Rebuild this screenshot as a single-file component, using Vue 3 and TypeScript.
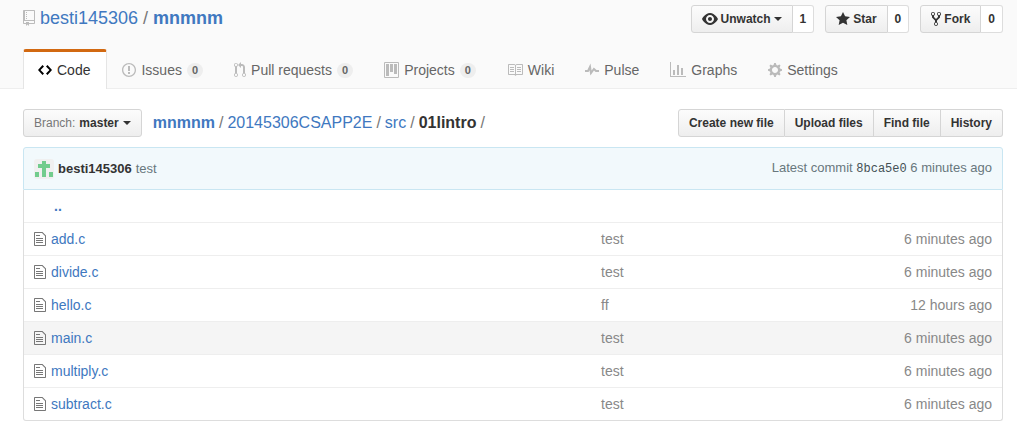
<script setup lang="ts">
interface Icon {
  w: number
  d: string
}

const icons: Record<string, Icon> = {
  repo: { w: 12, d: 'M4 9H3V8h1v1zm0-3H3v1h1V6zm0-2H3v1h1V4zm0-2H3v1h1V2zm8-1v12c0 .55-.45 1-1 1H6v2l-1.5-1.5L3 16v-2H1c-.55 0-1-.45-1-1V1c0-.55.45-1 1-1h10c.55 0 1 .45 1 1zm-1 10H1v2h2v-1h3v1h5v-2zm0-10H2v9h9V1z' },
  code: { w: 14, d: 'M9.5 3L8 4.5 11.5 8 8 11.5 9.5 13 14 8 9.5 3zm-5 0L0 8l4.5 5L6 11.5 2.5 8 6 4.5 4.5 3z' },
  issue: { w: 14, d: 'M7 2.3c3.14 0 5.7 2.56 5.7 5.7s-2.56 5.7-5.7 5.7A5.71 5.71 0 0 1 1.3 8c0-3.14 2.56-5.7 5.7-5.7zM7 1C3.14 1 0 4.14 0 8s3.14 7 7 7 7-3.14 7-7-3.14-7-7-7zm1 3H6v5h2V4zm0 6H6v2h2v-2z' },
  pull: { w: 12, d: 'M11 11.28V5c-.03-.78-.34-1.47-.94-2.06C9.46 2.35 8.78 2.03 8 2H7V0L4 3l3 3V4h1c.27.02.48.11.69.31.21.2.3.42.31.69v6.28A1.993 1.993 0 0 0 10 15a1.993 1.993 0 0 0 1-3.72zm-1 2.92c-.66 0-1.2-.55-1.2-1.2 0-.65.55-1.2 1.2-1.2.65 0 1.2.55 1.2 1.2 0 .65-.55 1.2-1.2 1.2zM4 3c0-1.11-.89-2-2-2a1.993 1.993 0 0 0-1 3.72v6.56A1.993 1.993 0 0 0 2 15a1.993 1.993 0 0 0 1-3.72V4.72c.59-.34 1-.98 1-1.72zm-.8 10c0 .66-.55 1.2-1.2 1.2-.65 0-1.2-.55-1.2-1.2 0-.65.55-1.2 1.2-1.2.65 0 1.2.55 1.2 1.2zM2 4.2C1.34 4.2.8 3.65.8 3c0-.65.55-1.2 1.2-1.2.65 0 1.2.55 1.2 1.2 0 .65-.55 1.2-1.2 1.2z' },
  project: { w: 15, d: 'M10 12h3V2h-3v10zm-4-2h3V2H6v8zm-4 4h3V2H2v12zm-1 1h13V1H1v14zM14 0H1a1 1 0 0 0-1 1v14a1 1 0 0 0 1 1h13a1 1 0 0 0 1-1V1a1 1 0 0 0-1-1z' },
  book: { w: 16, d: 'M3 5h4v1H3V5zm0 3h4V7H3v1zm0 2h4V9H3v1zm11-5h-4v1h4V5zm0 2h-4v1h4V7zm0 2h-4v1h4V9zm2-6v9c0 .55-.45 1-1 1H9.5l-1 1-1-1H2c-.55 0-1-.45-1-1V3c0-.55.45-1 1-1h5.5l1 1 1-1H15c.55 0 1 .45 1 1zm-8 .5L7.5 3H2v9h6V3.5zm7-.5H9.5l-.5.5V12h6V3z' },
  pulse: { w: 14, d: 'M11.5 8L8.8 5.4 6.6 8.5 5.5 1.6 2.38 8H0v2h3.6l.9-1.8.9 5.4L9 8.5l1.6 1.5H14V8z' },
  graph: { w: 16, d: 'M16 14v1H0V0h1v14h15zM5 13H3V8h2v5zm4 0H7V3h2v10zm4 0h-2V6h2v7z' },
  gear: { w: 14, d: 'M14 8.77v-1.6l-1.94-.64-.45-1.09.88-1.84-1.13-1.13-1.81.91-1.09-.45-.69-1.92h-1.6l-.63 1.94-1.11.45-1.84-.88-1.13 1.13.91 1.81-.45 1.09L0 7.23v1.59l1.94.64.45 1.09-.88 1.84 1.13 1.13 1.81-.91 1.09.45.69 1.92h1.59l.63-1.94 1.11-.45 1.84.88 1.13-1.13-.92-1.81.47-1.09L14 8.75v.02zM7 11c-1.66 0-3-1.34-3-3s1.34-3 3-3 3 1.34 3 3-1.34 3-3 3z' },
  eye: { w: 16, d: 'M8.06 2C3 2 0 8 0 8s3 6 8.06 6C13 14 16 8 16 8s-3-6-7.94-6zM8 12c-2.2 0-4-1.78-4-4 0-2.2 1.8-4 4-4 2.22 0 4 1.8 4 4 0 2.22-1.78 4-4 4zm2-4c0 1.11-.89 2-2 2-1.11 0-2-.89-2-2 0-1.11.89-2 2-2 1.11 0 2 .89 2 2z' },
  star: { w: 14, d: 'M14 6l-4.9-.64L7 1 4.9 5.36 0 6l3.6 3.26L2.67 14 7 11.67 11.33 14l-.93-4.74z' },
  fork: { w: 10, d: 'M8 1a1.993 1.993 0 0 0-1 3.72V6L5 8 3 6V4.72A1.993 1.993 0 0 0 2 1a1.993 1.993 0 0 0-1 3.72V6.5l3 3v1.78A1.993 1.993 0 0 0 5 15a1.993 1.993 0 0 0 1-3.72V9.5l3-3V4.72A1.993 1.993 0 0 0 8 1zM2 4.2C1.34 4.2.8 3.65.8 3c0-.65.55-1.2 1.2-1.2.65 0 1.2.55 1.2 1.2 0 .65-.55 1.2-1.2 1.2zm3 10c-.66 0-1.2-.55-1.2-1.2 0-.65.55-1.2 1.2-1.2.65 0 1.2.55 1.2 1.2 0 .65-.55 1.2-1.2 1.2zm3-10c-.66 0-1.2-.55-1.2-1.2 0-.65.55-1.2 1.2-1.2.65 0 1.2.55 1.2 1.2 0 .65-.55 1.2-1.2 1.2z' },
  file: { w: 12, d: 'M6 5H2V4h4v1zM2 8h7V7H2v1zm0 2h7V9H2v1zm0 2h7v-1H2v1zm10-7.5V14c0 .55-.45 1-1 1H1c-.55 0-1-.45-1-1V2c0-.55.45-1 1-1h7.5L12 4.5zM11 5L8 2H1v12h10V5z' },
}

const actions = [
  { icon: 'eye', label: 'Unwatch', count: 1, menu: true },
  { icon: 'star', label: 'Star', count: 0, menu: false },
  { icon: 'fork', label: 'Fork', count: 0, menu: false },
]

const tabs: { icon: string; label: string; count?: number }[] = [
  { icon: 'code', label: 'Code' },
  { icon: 'issue', label: 'Issues', count: 0 },
  { icon: 'pull', label: 'Pull requests', count: 0 },
  { icon: 'project', label: 'Projects', count: 0 },
  { icon: 'book', label: 'Wiki' },
  { icon: 'pulse', label: 'Pulse' },
  { icon: 'graph', label: 'Graphs' },
  { icon: 'gear', label: 'Settings' },
]

const fileActions = ['Create new file', 'Upload files', 'Find file', 'History']

const files = [
  { name: 'add.c', message: 'test', age: '6 minutes ago' },
  { name: 'divide.c', message: 'test', age: '6 minutes ago' },
  { name: 'hello.c', message: 'ff', age: '12 hours ago' },
  { name: 'main.c', message: 'test', age: '6 minutes ago' },
  { name: 'multiply.c', message: 'test', age: '6 minutes ago' },
  { name: 'subtract.c', message: 'test', age: '6 minutes ago' },
]
const focused = 'main.c'
</script>

<template>
  <div class="page">
    <header class="head">
      <div class="wrap title-row">
        <h1 class="title">
          <svg class="icon" width="12" height="16" viewBox="0 0 12 16" aria-hidden="true"><path :d="icons.repo.d" /></svg>
          <a href="#">besti145306</a>
          <span class="sep">/</span>
          <a href="#" class="strong">mnmnm</a>
        </h1>
        <ul class="actions">
          <li v-for="a in actions" :key="a.label">
            <button type="button" class="btn">
              <svg class="icon" :width="icons[a.icon].w" height="16" :viewBox="`0 0 ${icons[a.icon].w} 16`" aria-hidden="true"><path :d="icons[a.icon].d" /></svg>
              {{ a.label }}
              <span v-if="a.menu" class="caret"></span>
            </button>
            <a href="#" class="count">{{ a.count }}</a>
          </li>
        </ul>
      </div>
      <nav class="wrap tabs">
        <a v-for="(t, i) in tabs" :key="t.label" href="#" class="tab" :class="{ selected: i === 0 }">
          <svg class="icon" :width="icons[t.icon].w" height="16" :viewBox="`0 0 ${icons[t.icon].w} 16`" aria-hidden="true"><path :d="icons[t.icon].d" /></svg>
          <span>{{ t.label }}</span>
          <span v-if="t.count !== undefined" class="counter">{{ t.count }}</span>
        </a>
      </nav>
    </header>

    <main class="wrap">
      <div class="file-nav">
        <button type="button" class="btn branch"><span class="muted">Branch:</span> master <span class="caret"></span></button>
        <div class="crumbs">
          <a href="#" class="strong">mnmnm</a><span class="sep">/</span>
          <a href="#">20145306CSAPP2E</a><span class="sep">/</span>
          <a href="#">src</a><span class="sep">/</span>
          <strong>01lintro</strong><span class="sep">/</span>
        </div>
        <div class="group">
          <button v-for="f in fileActions" :key="f" type="button" class="btn">{{ f }}</button>
        </div>
      </div>

      <div class="commit">
        <svg class="avatar" width="20" height="20" viewBox="0 0 20 20" aria-hidden="true">
          <rect width="20" height="20" rx="3" fill="#f0f0f0" />
          <path d="M8 2h4v3h4v4h-4v9H8V9H4V5h4zM1 13h4v5H1zM15 13h4v5h-4z" fill="#72cc8d" />
        </svg>
        <a href="#" class="author">besti145306</a>
        <a href="#" class="message">test</a>
        <span class="latest">Latest commit <a href="#" class="sha">8bca5e0</a> 6 minutes ago</span>
      </div>

      <table class="files">
        <colgroup>
          <col class="col-name" />
          <col class="col-msg" />
          <col />
        </colgroup>
        <tbody>
          <tr>
            <td colspan="3"><a href="#" class="up">..</a></td>
          </tr>
          <tr v-for="f in files" :key="f.name" :class="{ focused: f.name === focused }">
            <td>
              <div class="entry">
                <svg class="icon" width="12" height="16" viewBox="0 0 12 16" aria-hidden="true"><path :d="icons.file.d" /></svg>
                <a href="#">{{ f.name }}</a>
              </div>
            </td>
            <td class="msg">{{ f.message }}</td>
            <td class="age">{{ f.age }}</td>
          </tr>
        </tbody>
      </table>
    </main>
  </div>
</template>

<style>
body {
  margin: 0;
  background: #fff;
}
</style>

<style scoped>
.page {
  font: 14px/20px "Liberation Sans", Arial, sans-serif;
  color: #333;
}
a {
  color: #4078c0;
  text-decoration: none;
}
.icon {
  display: block;
  flex: none;
  fill: currentColor;
  fill-rule: evenodd;
}
.wrap {
  margin: 0 14px 0 23px;
}
.head {
  background: #fafafa;
  border-bottom: 1px solid #eee;
}
.title-row {
  display: flex;
  justify-content: space-between;
  align-items: flex-start;
  padding-top: 5px;
  height: 44px;
  box-sizing: border-box;
}
.title {
  display: flex;
  align-items: center;
  gap: 5px;
  margin: 0;
  font-size: 18px;
  line-height: 26px;
  font-weight: 400;
}
.title .icon {
  color: #bbb;
}
.strong {
  font-weight: 700;
}
.sep {
  color: #777;
}
.actions {
  display: flex;
  gap: 11px;
  margin: 0;
  padding: 0;
  list-style: none;
}
.actions li {
  display: flex;
}
.btn {
  display: flex;
  align-items: center;
  gap: 4px;
  box-sizing: border-box;
  height: 28px;
  margin: 0;
  padding: 0 10px;
  font: bold 12px/20px "Liberation Sans", Arial, sans-serif;
  color: #333;
  white-space: nowrap;
  background: linear-gradient(#fcfcfc, #eee);
  border: 1px solid #d5d5d5;
  border-radius: 3px;
}
.actions .btn {
  gap: 3px;
  border-radius: 3px 0 0 3px;
}
.count {
  box-sizing: border-box;
  height: 28px;
  padding: 0 7px;
  font-size: 12px;
  font-weight: 700;
  line-height: 26px;
  color: #333;
  background: #fff;
  border: 1px solid #ddd;
  border-left: 0;
  border-radius: 0 3px 3px 0;
}
.caret {
  width: 0;
  height: 0;
  border: 4px solid transparent;
  border-top-color: currentColor;
  border-bottom: 0;
}
.tabs {
  display: flex;
  margin-top: 5px;
  margin-bottom: -1px;
}
.tab {
  display: flex;
  align-items: center;
  gap: 5px;
  box-sizing: border-box;
  height: 40px;
  padding: 2px 15px 1px 14px;
  color: #666;
  white-space: nowrap;
  border: 1px solid transparent;
  border-bottom: 0;
}
.tab .icon {
  color: #bbb;
}
.tab.selected {
  padding: 0 16px 1px 14px;
  color: #333;
  background: #fff;
  border-color: #d26911 #e5e5e5 transparent;
  border-top-width: 3px;
  border-radius: 3px 3px 0 0;
}
.tab.selected .icon {
  color: #000;
}
.counter {
  padding: 2px 5px;
  font-size: 11px;
  font-weight: 700;
  line-height: 11px;
  background: #eee;
  border-radius: 20px;
}
.file-nav {
  display: flex;
  align-items: center;
  padding: 20px 0 10px;
}
.branch .muted {
  font-weight: 400;
  color: #777;
}
.crumbs {
  display: flex;
  gap: 4px;
  margin-left: 11px;
  font-size: 16px;
  line-height: 26px;
}
.group {
  display: flex;
  margin-left: auto;
}
.group .btn {
  border-radius: 0;
}
.group .btn + .btn {
  border-left: 0;
}
.group .btn:first-child {
  border-radius: 3px 0 0 3px;
}
.group .btn:last-child {
  border-radius: 0 3px 3px 0;
}
.commit {
  display: flex;
  align-items: center;
  gap: 4px;
  padding: 10px;
  font-size: 13px;
  color: #68777d;
  background: #f2f9fc;
  border: 1px solid #c9e6f2;
  border-radius: 3px 3px 0 0;
}
.author {
  font-weight: 700;
  color: #333;
}
.message {
  color: #68777d;
}
.latest {
  margin-left: auto;
}
.sha {
  font-family: "Liberation Mono", monospace;
  font-size: 12px;
  color: #445055;
}
.files {
  width: 100%;
  table-layout: fixed;
  border: 1px solid #ddd;
  border-top: 0;
  border-radius: 0 0 3px 3px;
  border-collapse: separate;
  border-spacing: 0;
}
.col-name {
  width: 59%;
}
.col-msg {
  width: 20%;
}
.files td {
  box-sizing: border-box;
  height: 33px;
  padding: 6px 10px;
  border-top: 1px solid #eee;
}
.files tr:first-child td {
  height: 32px;
  border-top: 0;
}
.files .msg,
.files .age {
  color: #888;
}
.files .msg {
  padding-left: 0;
}
.files .age {
  text-align: right;
}
.entry {
  display: flex;
  align-items: center;
  gap: 5px;
}
.entry .icon {
  color: #777;
}
.up {
  margin-left: 20px;
  font-weight: 700;
}
.focused {
  background: #f5f5f5;
}
</style>
